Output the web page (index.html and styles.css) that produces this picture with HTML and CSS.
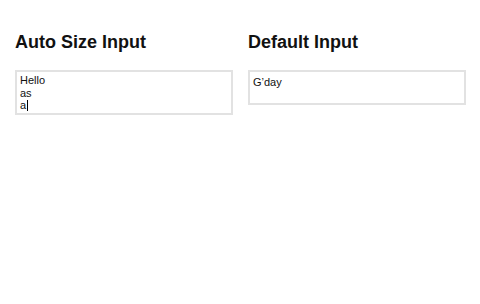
FILE: index.html
```
<!DOCTYPE html>
<html lang="en">
<head>
    <meta charset="UTF-8">
    <meta name="viewport" content="width=device-width, initial-scale=1.0">
    <title>Auto Size Input</title>
    <link rel="stylesheet" href="styles.css">
</head>
<body>
    <div class="page">
        <div class="col">
            <h2>Auto Size Input</h2>
            <div class="field auto">Hello<br>as<br>a<span class="caret"></span></div>
        </div>
        <div class="col">
            <h2>Default Input</h2>
            <div class="field fixed">G’day</div>
        </div>
    </div>
</body>
</html>
```

FILE: styles.css
```
body {
    margin: 0;
    background: #fff;
    color: #111;
    font-family: "Liberation Sans", Arial, sans-serif;
}

.page {
    display: grid;
    grid-template-columns: 218px 218px;
    column-gap: 15px;
    padding: 30px 14px 0 15px;
}

h2 {
    margin: 0 0 16px 0;
    font-size: 18px;
    line-height: 24px;
    font-weight: bold;
}

.field {
    box-sizing: border-box;
    border: 2px solid #e2e2e2;
    padding: 2px 3px;
    font-size: 11px;
    line-height: 12.5px;
}

.auto {
    height: 45px;
}

.fixed {
    height: 35px;
    padding-top: 4px;
}

.caret {
    display: inline-block;
    width: 1px;
    height: 11px;
    background: #000;
    vertical-align: -2px;
    margin-left: 1px;
}
```
